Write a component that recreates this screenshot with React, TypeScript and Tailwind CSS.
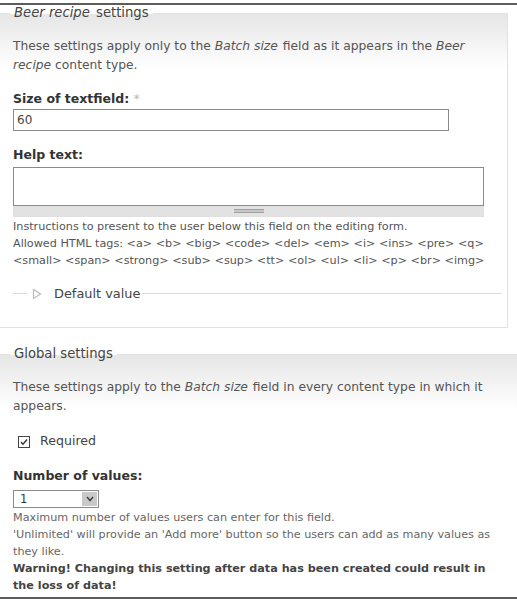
const Legend = ({ children }: { children: React.ReactNode }) => (
  <legend className="ml-[10px] px-[4px] text-[13.2px] leading-[16px] text-[#444]">
    {children}
  </legend>
);

const App = () => {
  return (
    <div className="w-[517px] h-[604px] overflow-hidden bg-white font-['DejaVu_Sans',Verdana,sans-serif] text-[#555]">
      <div className="h-[3px]" />
      <div className="h-[2px] bg-[#5c5c5c]" />

      {/* per content type settings */}
      <fieldset className="mr-[9px] border-t border-r border-b border-[#e2e2e2] bg-[linear-gradient(to_bottom,#e6e6e6,#ffffff_55px)] pb-[24px]">
        <Legend>
          <em className="pr-[2px]">Beer recipe</em> settings
        </Legend>
        <div className="pl-[13px] pr-[5px]">
          <p className="mt-[16px] text-[12.3px] leading-[19px]">
            These settings apply only to the <em className="pr-[1px]">Batch size</em> field as it appears in the <em>Beer recipe</em> content type.
          </p>

          <label className="mt-[15px] block text-[12.5px] font-bold leading-[18px] text-[#333]">
            Size of textfield: <span className="font-normal text-[#bbb]">*</span>
          </label>
          <input
            defaultValue="60"
            className="mt-[1px] block h-[22px] w-[436px] border border-[#8a8a8a] px-[3px] text-[12px] text-[#444] outline-none"
          />

          <label className="mt-[15px] block text-[12.5px] font-bold leading-[18px] text-[#333]">
            Help text:
          </label>
          <div className="mt-[3px] w-[471px]">
            <textarea className="block h-[39px] w-full resize-none border border-[#8a8a8a] outline-none" />
            <div className="flex h-[11px] items-center justify-center border-x border-b border-[#e0e0e0] bg-[#e2e2e2]">
              <div className="h-[4px] w-[30px] border-y border-[#a0a0a0] bg-[#c8c8c8]" />
            </div>
          </div>
          <div className="mt-[1px] text-[11.2px] leading-[17px] text-[#555]">
            <p>Instructions to present to the user below this field on the editing form.</p>
            <p>
              Allowed HTML tags: &lt;a&gt; &lt;b&gt; &lt;big&gt; &lt;code&gt; &lt;del&gt; &lt;em&gt; &lt;i&gt; &lt;ins&gt; &lt;pre&gt; &lt;q&gt; &lt;small&gt; &lt;span&gt; &lt;strong&gt; &lt;sub&gt; &lt;sup&gt; &lt;tt&gt; &lt;ol&gt; &lt;ul&gt; &lt;li&gt; &lt;p&gt; &lt;br&gt; &lt;img&gt;
            </p>
          </div>

          {/* collapsed default value fieldset */}
          <div className="mt-[15px] flex items-center">
            <div className="h-px w-[14px] bg-[#ddd]" />
            <svg width="12" height="12" viewBox="0 0 12 12" className="ml-[4px]">
              <path d="M2.5 1.5 L9.5 6 L2.5 10.5 Z" fill="none" stroke="#bbb" strokeWidth="1.2" />
            </svg>
            <span className="ml-[11px] text-[12.9px] text-[#444]">Default value</span>
            <div className="ml-[2px] h-px flex-1 bg-[#ddd]" />
          </div>
        </div>
      </fieldset>

      {/* settings shared by every content type */}
      <fieldset className="mt-[18px] border-t border-[#e2e2e2] bg-[linear-gradient(to_bottom,#e6e6e6,#ffffff_55px)]">
        <Legend>Global settings</Legend>
        <div className="px-[13px]">
          <p className="mt-[16px] text-[12.3px] leading-[19px]">
            These settings apply to the <em className="pr-[1px]">Batch size</em> field in every content type in which it appears.
          </p>

          <label className="mt-[16px] ml-[5px] flex items-center">
            <span className="flex h-[12px] w-[12px] items-center justify-center border border-[#444] bg-white">
              <svg width="8" height="8" viewBox="0 0 8 8">
                <path d="M1 4 L3 6.2 L7 1.5" fill="none" stroke="#333" strokeWidth="1.4" />
              </svg>
            </span>
            <span className="ml-[10px] text-[12.6px] text-[#444]">Required</span>
          </label>

          <label className="mt-[16px] block text-[12.5px] font-bold leading-[18px] text-[#333]">
            Number of values:
          </label>
          <div className="mt-[5px] flex h-[18px] w-[86px] items-center border border-[#8a8a8a] bg-white">
            <span className="ml-[6px] flex-1 text-[11.5px] text-[#333]">1</span>
            <span className="mr-[1px] flex h-[14px] w-[15px] items-center justify-center bg-[#c9c9c9]">
              <svg width="8" height="6" viewBox="0 0 8 6">
                <path d="M1 1 L4 4.5 L7 1" fill="none" stroke="#444" strokeWidth="1.6" />
              </svg>
            </span>
          </div>
          <div className="mt-[1px] text-[11.2px] leading-[17px] text-[#666]">
            <p>Maximum number of values users can enter for this field.</p>
            <p>'Unlimited' will provide an 'Add more' button so the users can add as many values as they like.</p>
            <p className="font-bold text-[#444]">
              Warning! Changing this setting after data has been created could result in the loss of data!
            </p>
          </div>
        </div>
      </fieldset>

      <div className="mt-[3px] h-[2px] bg-[#5c5c5c]" />
    </div>
  );
};

export default App;
